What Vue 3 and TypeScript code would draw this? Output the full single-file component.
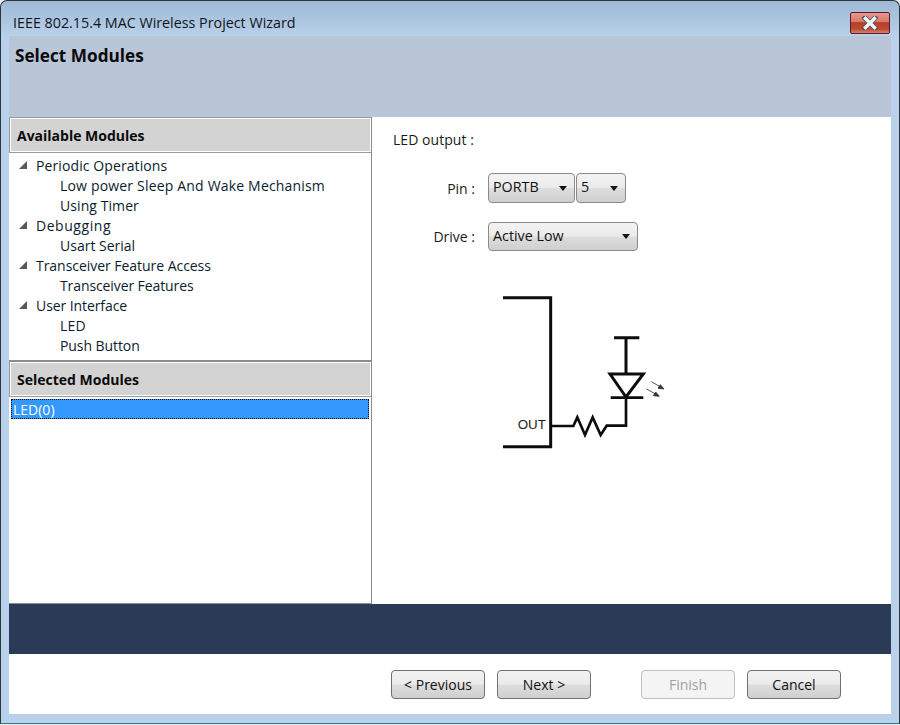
<script setup lang="ts">
interface TreeRow { label: string; parent: boolean; spacing?: number }
const rows: TreeRow[] = [
  { label: 'Periodic Operations', parent: true, spacing: 0.1 },
  { label: 'Low power Sleep And Wake Mechanism', parent: false, spacing: 0.18 },
  { label: 'Using Timer', parent: false, spacing: 0.08 },
  { label: 'Debugging', parent: true, spacing: 0.55 },
  { label: 'Usart Serial', parent: false },
  { label: 'Transceiver Feature Access', parent: true, spacing: -0.04 },
  { label: 'Transceiver Features', parent: false, spacing: -0.1 },
  { label: 'User Interface', parent: true, spacing: -0.08 },
  { label: 'LED', parent: false, spacing: 0.2 },
  { label: 'Push Button', parent: false, spacing: -0.08 },
]
</script>

<template>
  <div class="window">
    <div class="titlebar">
      <span class="title">IEEE 802.15.4 MAC Wireless Project Wizard</span>
      <button class="close" aria-label="Close">
        <svg width="20" height="14" viewBox="0 0 20 14">
          <path d="M5 2 L15 12 M15 2 L5 12" stroke="#4a5560" stroke-width="5" stroke-linecap="square" fill="none" />
          <path d="M5.5 2.5 L14.5 11.5 M14.5 2.5 L5.5 11.5" stroke="#f4f5f7" stroke-width="3.4" stroke-linecap="square" fill="none" />
        </svg>
      </button>
    </div>
    <div class="client">
      <header class="head"><h1>Select Modules</h1></header>
      <main class="main">
        <aside class="left">
          <div class="section">Available Modules</div>
          <ul class="tree">
            <li
              v-for="r in rows"
              :key="r.label"
              :class="['row', { parent: r.parent }]"
              :style="r.spacing ? { letterSpacing: r.spacing + 'px' } : undefined"
            >
              <svg v-if="r.parent" class="arrow" width="9" height="9" viewBox="0 0 9 9"><path d="M9 0 V8 H1 Z" fill="#595959" /></svg>
              <span>{{ r.label }}</span>
            </li>
          </ul>
          <div class="section second">Selected Modules</div>
          <div class="list"><div class="item">LED(0)</div></div>
        </aside>
        <section class="right">
          <div class="led-title">LED output :</div>
          <div class="form-row pin">
            <label>Pin :</label>
            <div class="select w-port"><span>PORTB</span><i class="caret"></i></div>
            <div class="select w-num"><span>5</span><i class="caret"></i></div>
          </div>
          <div class="form-row drive">
            <label>Drive :</label>
            <div class="select w-drive"><span>Active Low</span><i class="caret"></i></div>
          </div>
          <svg class="diagram" width="190" height="170" viewBox="0 0 570 510">
            <g fill="none" stroke="#0c0c0c" stroke-width="9">
              <path d="M39 38 H182 V485 H39" />
              <path d="M182 423 H250 L262 397 L285 450 L308 397 L332 450 L350 422 H408 V340" stroke-width="8" />
              <path d="M372 158 H448 M408 158 V265" />
              <path d="M360 267 H460 L408 336 Z" stroke-width="9" />
              <path d="M362 338 H460" stroke-width="8" />
            </g>
            <g stroke="#333" stroke-width="2.5" fill="#333">
              <path d="M484 290 L512 306" />
              <path d="M522 312 L504 310 L511 299 Z" />
              <path d="M470 312 L498 328" />
              <path d="M508 334 L490 332 L497 321 Z" />
            </g>
            <text x="83" y="432" class="out">OUT</text>
          </svg>
        </section>
      </main>
      <div class="band"></div>
      <footer class="foot">
        <button class="btn">&lt; Previous</button>
        <button class="btn next">Next &gt;</button>
        <button class="btn finish" disabled>Finish</button>
        <button class="btn cancel">Cancel</button>
      </footer>
    </div>
  </div>
</template>

<style>
html, body { margin: 0; background: #e9edf1; }
</style>

<style scoped>
* { box-sizing: border-box; }
.window {
  width: 900px;
  height: 724px;
  border: 1px solid #2b3540;
  border-bottom-color: #1f7f9a;
  border-radius: 7px 7px 0 0;
  background: linear-gradient(180deg, #9fb9d4 0, #b9d1ea 36px, #b9d1ea 100%);
  padding: 0 8px 9px;
  display: flex;
  flex-direction: column;
  font-family: "Open Sans", "Noto Sans", sans-serif;
  font-size: 14px;
  color: #111;
}
.titlebar {
  height: 35px;
  flex: none;
  display: flex;
  align-items: flex-start;
  justify-content: space-between;
}
.title {
  margin: 12px 0 0 4px;
  font-size: 14.3px;
  line-height: 20px;
  color: #10161c;
}
.close {
  width: 40px;
  height: 22px;
  margin: 11px 1px 0 0;
  padding: 0;
  border: 1px solid #5a1a2c;
  border-radius: 2px;
  background: linear-gradient(180deg, #e7998c 0, #d9786a 44%, #b63f28 48%, #c04b33 80%, #d6806c 100%);
  display: flex;
  align-items: center;
  justify-content: center;
}
.client {
  flex: 1;
  display: flex;
  flex-direction: column;
  background: #fff;
  min-height: 0;
}
.head {
  height: 81px;
  flex: none;
  background: #b9c6d8;
  padding: 9px 6px;
}
.head h1 {
  margin: 0;
  font-size: 17.2px;
  line-height: 22px;
  font-weight: 700;
  color: #0a0a0a;
}
.main {
  height: 487px;
  flex: none;
  display: flex;
}
.left {
  width: 363px;
  flex: none;
  display: flex;
  flex-direction: column;
  border-right: 1px solid #8c8c8c;
  border-bottom: 1px solid #8c8c8c;
}
.section {
  height: 36px;
  flex: none;
  background: #d3d3d3;
  border: 1px solid #9a9a9a;
  border-right: 0;
  box-shadow: inset 0 0 0 1px #fff;
  padding-left: 7px;
  display: flex;
  align-items: center;
  font-weight: 700;
  font-size: 14px;
  color: #0a0a0a;
}
.second { height: 35px; border-top: 0; }
.tree {
  list-style: none;
  margin: 0;
  padding: 3px 0 0;
  height: 209px;
  flex: none;
  border-bottom: 2px solid #8c8c8c;
}
.row {
  height: 20px;
  line-height: 20px;
  padding-left: 51px;
  color: #0a1c30;
  white-space: nowrap;
}
.row.parent { padding-left: 27px; position: relative; }
.arrow { position: absolute; left: 9px; top: 5px; }
.list { flex: 1; padding: 2px 2px 0 2px; }
.item {
  height: 20px;
  line-height: 19px;
  background: #3399ff;
  color: #fff;
  border: 1px dotted #000;
  padding-left: 1px;
}
.right {
  flex: 1;
  background: #fff;
  padding: 13px 0 0 21px;
  display: flex;
  flex-direction: column;
  align-items: flex-start;
}
.led-title { line-height: 20px; color: #1a1a1a; letter-spacing: 0.05px; }
.form-row { display: flex; align-items: center; height: 30px; }
.form-row label { width: 82px; text-align: right; color: #1a1a1a; }
.pin { margin-top: 23px; }
.drive { margin-top: 19px; height: 29px; }
.select {
  height: 30px;
  margin-left: 13px;
  border: 1px solid #8a8a8a;
  border-radius: 4px;
  background: linear-gradient(180deg, #f3f3f3 0, #ebebeb 48%, #dddddd 52%, #cfcfcf 100%);
  display: flex;
  align-items: center;
  justify-content: space-between;
  padding: 0 7px 3px 4px;
  font-size: 14.3px;
  color: #111;
}
.w-port { width: 87px; }
.w-num { width: 50px; margin-left: 1px; }
.w-drive { width: 150px; height: 29px; }
.caret {
  width: 0;
  height: 0;
  margin-top: 3px;
  border-left: 4px solid transparent;
  border-right: 4px solid transparent;
  border-top: 5px solid #111;
}
.diagram { margin: 34px 0 0 97px; display: block; flex: none; }
.out { font-family: "Liberation Sans", sans-serif; font-size: 40px; fill: #1a1a1a; }
.band { height: 50px; flex: none; background: #2b3a57; }
.foot {
  flex: 1;
  display: flex;
  align-items: flex-start;
  padding: 16px 0 0 382px;
  background: #fff;
}
.btn {
  width: 94px;
  height: 29px;
  border: 1px solid #707070;
  border-radius: 4px;
  background: linear-gradient(180deg, #f2f2f2 0, #ebebeb 48%, #dddddd 52%, #cfcfcf 100%);
  font: inherit;
  color: #111;
  padding: 0;
}
.next { margin-left: 12px; }
.finish {
  margin-left: 50px;
  border-color: #c0c0c0;
  background: #f4f4f4;
  color: #a0a0a0;
}
.cancel { margin-left: 12px; }
</style>
